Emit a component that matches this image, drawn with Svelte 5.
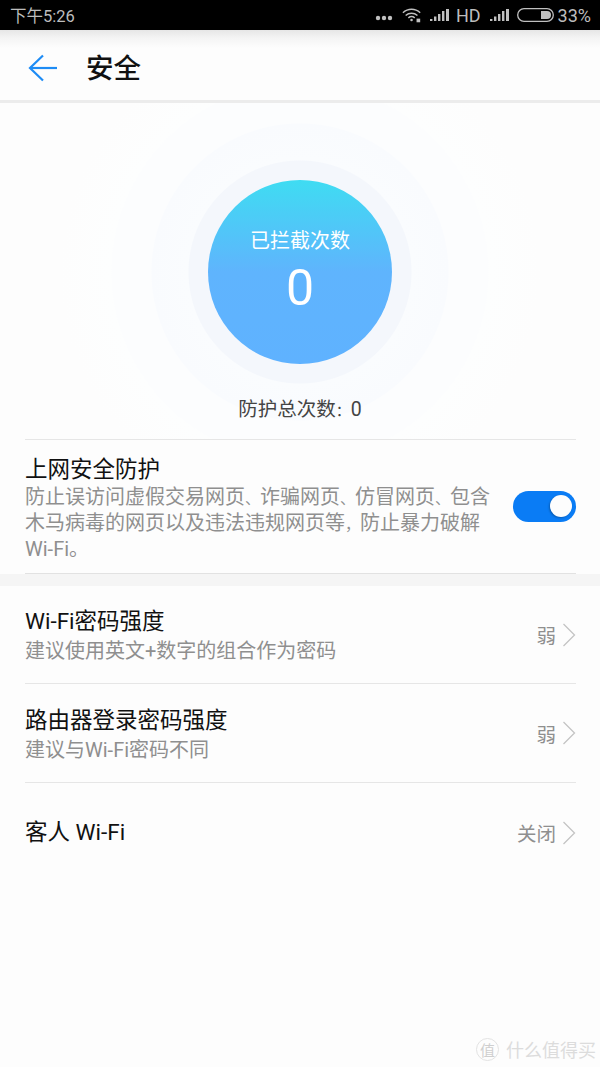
<script>
  const rows = [
    { title: "Wi-Fi密码强度", sub: "建议使用英文+数字的组合作为密码", value: "弱" },
    { title: "路由器登录密码强度", sub: "建议与Wi-Fi密码不同", value: "弱" },
    { title: "客人 Wi-Fi", sub: "", value: "关闭" },
  ];
</script>

<div class="page">
  <div class="statusbar">
    <span class="time">下午5:26</span>
    <div class="status-right">
      <svg class="dots" width="18" height="6" viewBox="0 0 18 6"><circle cx="3" cy="3" r="2.2" /><circle cx="9" cy="3" r="2.2" /><circle cx="15" cy="3" r="2.2" /></svg>
      <svg class="wifi" width="20" height="16" viewBox="0 0 22 16" fill="none" stroke="#c0c0c0" stroke-width="1.6">
        <path d="M1 5.5C6.5 .5 14.5 .5 20 5.5" />
        <path d="M4 8.5C7.8 5.2 13.2 5.2 17 8.5" />
        <path d="M7 11.2C9.2 9.4 11.8 9.4 14 11.2" />
        <circle cx="10.5" cy="13.5" r="1.4" fill="#c0c0c0" stroke="none" />
        <rect x="16" y="12" width="4" height="4" fill="#c0c0c0" stroke="none" />
      </svg>
      <svg class="signal" width="20" height="14" viewBox="0 0 20 14" fill="#c0c0c0"><path d="M0 13h2.4v-2H0zM4 13h2.4V8.5H4zM8 13h2.4V6H8zM12 13h2.4V3H12zM16 13h3V1h-3z" /></svg>
      <span class="hd">HD</span>
      <svg class="signal" width="20" height="14" viewBox="0 0 20 14" fill="#c0c0c0"><path d="M0 13h2.4v-2H0zM4 13h2.4V8.5H4zM8 13h2.4V6H8zM12 13h2.4V3H12zM16 13h3V1h-3z" /></svg>
      <svg class="battery" width="37" height="14" viewBox="0 0 37 14" fill="none"><rect x=".7" y=".7" width="35.6" height="12.6" rx="6.3" stroke="#c0c0c0" stroke-width="1.3" /><path d="M24 3h6a4 4 0 0 1 0 8h-6z" fill="#c0c0c0" /></svg>
      <span class="pct">33%</span>
    </div>
  </div>

  <header class="header">
    <svg class="back" width="30" height="28" viewBox="0 0 30 28" fill="none" stroke="#1e8cf5" stroke-width="2.2">
      <path d="M15 1.5 2 14l13 12.5" />
      <path d="M2 14h27" />
    </svg>
    <h1>安全</h1>
  </header>

  <section class="hero">
    <div class="disc">
      <span class="disc-label">已拦截次数</span>
      <span class="disc-count">0</span>
    </div>
    <p class="total">防护总次数<span class="colon">：</span>0</p>
  </section>

  <div class="inset">
    <div class="protect">
      <div class="protect-text">
        <div class="title">上网安全防护</div>
        <div class="sub">
          <div>防止误访问虚假交易网页<span class="mark">、</span>诈骗网页<span class="mark">、</span>仿冒网页<span class="mark">、</span>包含</div>
          <div>木马病毒的网页以及违法违规网页等<span class="mark">，</span>防止暴力破解</div>
          <div>Wi-Fi。</div>
        </div>
      </div>
      <div class="toggle"><span class="knob"></span></div>
    </div>
  </div>
  <div class="band"></div>

  <div class="list">
    {#each rows as row}
      <div class="row" class:single={!row.sub}>
        <div class="row-text">
          <div class="title">{row.title}</div>
          {#if row.sub}<div class="sub">{row.sub}</div>{/if}
        </div>
        <span class="value">{row.value}</span>
        <svg class="chev" width="14" height="24" viewBox="0 0 14 24" fill="none" stroke="#c4c4c4" stroke-width="1.3"><path d="M1.5 1 12.5 12 1.5 23" /></svg>
      </div>
    {/each}
  </div>

  <div class="watermark">
    <span class="wm-badge">值</span>
    <span class="wm-text">什么值得买</span>
  </div>
</div>

<style>
  :global(body) {
    margin: 0;
    background: #fdfdfd;
  }

  .page {
    position: relative;
    width: 600px;
    height: 1067px;
    overflow: hidden;
    background: #fdfdfd;
    font-family: "Roboto", "Noto Sans CJK SC", sans-serif;
  }

  .statusbar {
    height: 30px;
    background: #000;
    color: #bdbdbd;
    display: flex;
    align-items: center;
    justify-content: space-between;
    padding: 0 9px 0 10px;
    font-size: 16.5px;
  }

  .status-right {
    display: flex;
    align-items: center;
  }

  .dots {
    fill: #c0c0c0;
    margin: 5px 9px 0 0;
  }

  .wifi {
    margin-right: 8px;
  }

  .signal {
    margin-right: 6px;
  }

  .hd {
    font-size: 18px;
    margin: 0 9px 0 0;
  }

  .battery {
    margin: 0 4px 0 1px;
  }

  .pct {
    font-size: 18px;
  }

  .header {
    height: 70px;
    display: flex;
    align-items: center;
    padding-left: 28px;
    background: linear-gradient(#e6e6e6, #f4f4f4 8px, #fdfdfd 18px);
    border-bottom: 3px solid #ececec;
  }

  .back {
    margin-top: 6px;
  }

  h1 {
    margin: 2px 0 0 28px;
    font-size: 27.5px;
    font-weight: 500;
    color: #111;
  }

  .hero {
    height: 336px;
    display: flex;
    flex-direction: column;
    align-items: center;
    background: radial-gradient(circle 260px at 300px 169px,
      #f4f7fc 0, #f4f7fc 111px,
      #fafcfe 112px, #f9fbfe 148px,
      #fcfdfe 149px, #fcfdfe 188px,
      #fdfefe 189px, #fdfdfd 240px);
  }

  .disc {
    width: 184px;
    height: 184px;
    margin-top: 77px;
    border-radius: 50%;
    display: flex;
    flex-direction: column;
    align-items: center;
    color: #fff;
    background: linear-gradient(#3fdcf2, #5fb4fd 50%, #5fb2ff);
  }

  .disc-label {
    margin-top: 46px;
    font-size: 20px;
    line-height: 30px;
  }

  .disc-count {
    font-weight: 400;
    font-size: 50px;
    line-height: 58px;
    margin-top: 3px;
  }

  .total {
    margin: 33px 0 0;
    font-size: 19.5px;
    line-height: 26px;
    color: #444;
  }

  .colon {
    font-size: 15px;
  }

  .inset {
    margin: 0 24px 0 25px;
    border-top: 1px solid #e6e6e6;
    border-bottom: 1px solid #e2e2e2;
  }

  .protect {
    height: 133px;
    display: flex;
    align-items: center;
  }

  .protect-text {
    width: 470px;
    margin-top: 2px;
  }

  .title {
    font-size: 22.5px;
    line-height: 31px;
    color: #111;
  }

  .sub {
    font-size: 20px;
    line-height: 24px;
    color: #8f8f8f;
  }

  .row .sub {
    margin-top: 2px;
  }

  .mark {
    font-size: 15px;
  }

  .toggle {
    width: 63px;
    height: 31px;
    margin: 0 0 0 auto;
    box-sizing: border-box;
    padding: 4px;
    display: flex;
    justify-content: flex-end;
    border-radius: 16px;
    background: #0a7cf5;
  }

  .knob {
    width: 22px;
    height: 22px;
    border-radius: 50%;
    background: #fdfdfd;
    box-shadow: -1px 1px 2px rgba(0, 0, 0, 0.25);
  }

  .band {
    height: 12px;
    background: #f5f5f5;
  }

  .list {
    margin: 0 24px 0 25px;
  }

  .row {
    box-sizing: border-box;
    height: 98px;
    display: flex;
    align-items: center;
    border-bottom: 1px solid #e6e6e6;
  }

  .row + .row {
    height: 99px;
  }

  .row.single {
    border-bottom: none;
  }

  .row-text {
    flex: 1;
  }

  .value {
    font-size: 19.5px;
    color: #8f8f8f;
    margin-right: 6px;
  }

  .watermark {
    position: absolute;
    right: 4px;
    bottom: 5px;
    display: flex;
    align-items: center;
    gap: 7px;
    color: #dcdcdc;
    font-size: 18px;
  }

  .wm-badge {
    width: 21px;
    height: 21px;
    display: flex;
    align-items: center;
    justify-content: center;
    border: 1px solid #e3e3e3;
    border-radius: 50%;
    font-size: 15px;
    color: #cfcfcf;
  }
</style>
